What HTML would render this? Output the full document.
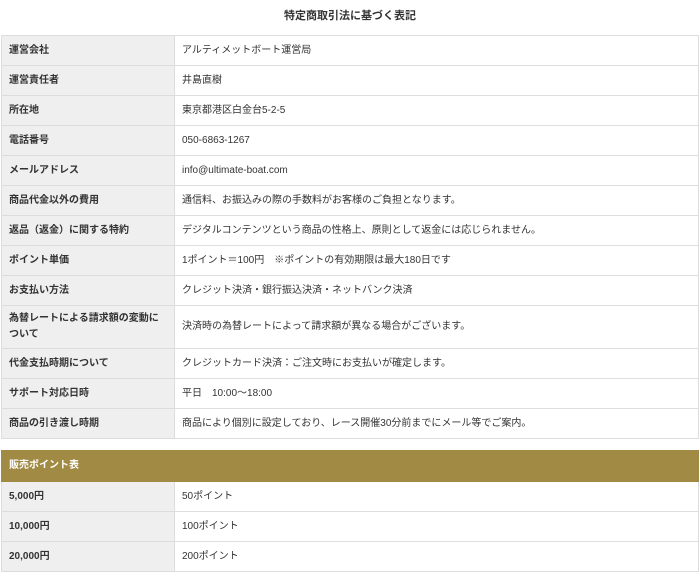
<!DOCTYPE html>
<html><head><meta charset="utf-8"><style>
body{margin:0;background:#fff;font-family:"Liberation Sans","Noto Sans CJK JP",sans-serif;color:#333;font-size:10px;}
h1{margin:0;position:absolute;top:7px;left:0;width:700px;text-align:center;font-size:11px;font-weight:bold;color:#333}
table{position:absolute;left:1px;width:698px;border-collapse:collapse;}
td{border:1px solid #ddd;padding:0 7px;height:29px;vertical-align:middle;line-height:16px}
td.l{background:#efefef;width:158px;font-weight:bold;padding-left:7px}
tr.h td{background:#a18a43;color:#fff;font-weight:bold;height:30px;border-color:#a18a43}
</style></head><body>
<h1>特定商取引法に基づく表記</h1>
<table style="top:35px">
<tr><td class="l">運営会社</td><td>アルティメットボート運営局</td></tr>
<tr><td class="l">運営責任者</td><td>井島直樹</td></tr>
<tr><td class="l">所在地</td><td>東京都港区白金台5-2-5</td></tr>
<tr><td class="l">電話番号</td><td>050-6863-1267</td></tr>
<tr><td class="l">メールアドレス</td><td>info@ultimate-boat.com</td></tr>
<tr><td class="l">商品代金以外の費用</td><td>通信料、お振込みの際の手数料がお客様のご負担となります。</td></tr>
<tr><td class="l">返品（返金）に関する特約</td><td>デジタルコンテンツという商品の性格上、原則として返金には応じられません。</td></tr>
<tr><td class="l">ポイント単価</td><td>1ポイント＝100円　※ポイントの有効期限は最大180日です</td></tr>
<tr><td class="l">お支払い方法</td><td>クレジット決済・銀行振込決済・ネットバンク決済</td></tr>
<tr><td class="l" style="height:42px">為替レートによる請求額の変動について</td><td>決済時の為替レートによって請求額が異なる場合がございます。</td></tr>
<tr><td class="l">代金支払時期について</td><td>クレジットカード決済：ご注文時にお支払いが確定します。</td></tr>
<tr><td class="l">サポート対応日時</td><td>平日　10:00～18:00</td></tr>
<tr><td class="l">商品の引き渡し時期</td><td>商品により個別に設定しており、レース開催30分前までにメール等でご案内。</td></tr>
</table>
<table style="top:450px">
<tr class="h"><td colspan="2">販売ポイント表</td></tr>
<tr><td class="l">5,000円</td><td>50ポイント</td></tr>
<tr><td class="l">10,000円</td><td>100ポイント</td></tr>
<tr><td class="l">20,000円</td><td>200ポイント</td></tr>
</table>
</body></html>
